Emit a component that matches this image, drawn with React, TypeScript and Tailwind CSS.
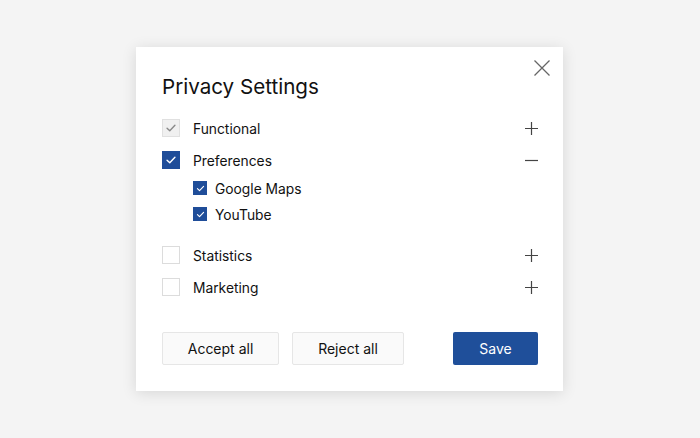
import React from "react";

const Check = ({ color, size }: { color: string; size: number }) => (
  <svg width={size} height={size} viewBox="0 0 16 16" fill="none">
    <path d="M3.5 8.2 L6.6 11.2 L12.5 4.8" stroke={color} strokeWidth="1.6" strokeLinecap="round" strokeLinejoin="round" />
  </svg>
);

const Plus = () => (
  <svg width="13" height="13" viewBox="0 0 13 13" fill="none">
    <path d="M6.5 0 V13 M0 6.5 H13" stroke="#444" strokeWidth="1.2" />
  </svg>
);

const Minus = () => (
  <svg width="13" height="13" viewBox="0 0 13 13" fill="none">
    <path d="M0 6.5 H13" stroke="#444" strokeWidth="1.2" />
  </svg>
);

function Row({ label, state, icon }: { label: string; state: "disabled" | "checked" | "empty"; icon: "plus" | "minus" }) {
  return (
    <div className="flex items-center h-[32px]">
      {state === "disabled" && (
        <div className="w-[18px] h-[18px] bg-[#f0f0f0] border border-[#e0e0e0] flex items-center justify-center">
          <Check color="#8a8a8a" size={14} />
        </div>
      )}
      {state === "checked" && (
        <div className="w-[18px] h-[18px] bg-[#1f4d99] flex items-center justify-center">
          <Check color="#ffffff" size={14} />
        </div>
      )}
      {state === "empty" && <div className="w-[18px] h-[18px] bg-white border border-[#dcdcdc]" />}
      <span className="ml-[13px] pt-[2px] leading-[18px] text-[13.8px] text-[#111] flex-1">{label}</span>
      <span className="flex">{icon === "plus" ? <Plus /> : <Minus />}</span>
    </div>
  );
}

function Sub({ label }: { label: string }) {
  return (
    <div className="flex items-center h-[26px] pl-[31px]">
      <div className="w-[14px] h-[14px] bg-[#1f4d99] flex items-center justify-center">
        <Check color="#ffffff" size={11} />
      </div>
      <span className="ml-[8px] pt-[2px] leading-[18px] text-[13.8px] text-[#111]">{label}</span>
    </div>
  );
}

export default function App() {
  return (
    <div
      className="w-[700px] h-[438px] bg-[#f4f4f4] flex items-center pl-[136px]"
      style={{ fontFamily: "Inter, 'Noto Sans', sans-serif" }}
    >
      <div className="relative w-[427px] h-[344px] bg-white shadow-[0_2px_14px_rgba(0,0,0,0.12)] pt-[26px] pl-[26px] pr-[25px]">
        <button className="absolute left-[398px] top-[13px] w-[16px] h-[16px] flex">
          <svg width="16" height="16" viewBox="0 0 16 16" fill="none">
            <path d="M0.5 0.5 L15.5 15.5 M15.5 0.5 L0.5 15.5" stroke="#666" strokeWidth="1.3" />
          </svg>
        </button>
        <h1 className="text-[20.6px] leading-[28px] text-[#111] font-normal">Privacy Settings</h1>
        <div className="mt-[11px]">
          <Row label="Functional" state="disabled" icon="plus" />
          <Row label="Preferences" state="checked" icon="minus" />
          <div className="-mt-[1px]">
            <Sub label="Google Maps" />
            <Sub label="YouTube" />
          </div>
          <div className="mt-[12px]">
            <Row label="Statistics" state="empty" icon="plus" />
            <Row label="Marketing" state="empty" icon="plus" />
          </div>
        </div>
        <div className="mt-[29px] flex items-center">
          <button className="w-[117px] h-[33px] bg-[#fafafa] border border-[#e6e6e6] rounded-[2px] text-[14px] text-[#111]">
            Accept all
          </button>
          <button className="ml-[13px] w-[112px] h-[33px] bg-[#fafafa] border border-[#e6e6e6] rounded-[2px] text-[14px] text-[#111]">
            Reject all
          </button>
          <button className="ml-auto w-[85px] h-[33px] bg-[#1f4f9a] rounded-[2px] text-[14px] text-white">
            Save
          </button>
        </div>
      </div>
    </div>
  );
}
